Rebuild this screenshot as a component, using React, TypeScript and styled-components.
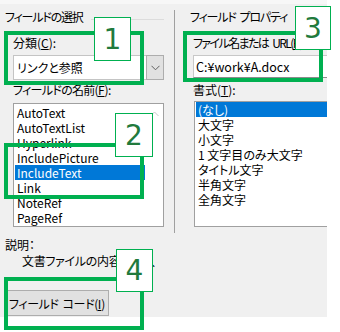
import styled, { createGlobalStyle } from "styled-components";

const GlobalStyle = createGlobalStyle`
  html, body {
    margin: 0;
    padding: 0;
    background: #ffffff;
  }
  body {
    font-family: "Noto Sans CJK JP", sans-serif;
    font-size: 12px;
    color: #000000;
  }
`;

const fieldNames = [
  "AutoText",
  "AutoTextList",
  "Hyperlink",
  "IncludePicture",
  "IncludeText",
  "Link",
  "NoteRef",
  "PageRef",
];

const formats = [
  "(なし)",
  "大文字",
  "小文字",
  "1 文字目のみ大文字",
  "タイトル文字",
  "半角文字",
  "全角文字",
];

const callouts = [
  { n: "1", box: { x: 4, y: 31, w: 140, h: 54 }, tag: { x: 94, y: 17, w: 37, h: 44 } },
  { n: "2", box: { x: 4, y: 143, w: 140, h: 56 }, tag: { x: 115, y: 113, w: 38, h: 44 } },
  { n: "3", box: { x: 183, y: 31, w: 140, h: 51 }, tag: { x: 295, y: 6, w: 36, h: 44 } },
  { n: "4", box: { x: 4, y: 277, w: 140, h: 53 }, tag: { x: 116, y: 249, w: 37, h: 43 } },
];

const App = () => {
  return (
    <>
      <GlobalStyle />
      <Screen>
        <Dialog>
          <TopStrip />
          <Columns>
            <LeftPane>
              <GroupHeader>
                <HeaderText>フィールドの選択</HeaderText>
                <HeaderLine />
              </GroupHeader>
              <Indented>
                <FieldLabel $top={10} $spacing={0}>
                  分類(<U>C</U>):
                </FieldLabel>
                <Combo>
                  <ComboValue>リンクと参照</ComboValue>
                  <ComboButton>
                    <svg width="9" height="6" viewBox="0 0 9 6">
                      <path d="M0.5 0.8 L4.5 4.8 L8.5 0.8" fill="none" stroke="#606060" strokeWidth="1" />
                    </svg>
                  </ComboButton>
                </Combo>
                <FieldLabel $top={2} $spacing={-0.7}>
                  フィールドの名前(<U>F</U>):
                </FieldLabel>
                <NameList>
                  <ListItems>
                    {fieldNames.map((name) => (
                      <ListRow key={name} $selected={name === "IncludeText"}>
                        {name}
                      </ListRow>
                    ))}
                  </ListItems>
                  <ScrollTrack>
                    <svg width="9" height="6" viewBox="0 0 9 6">
                      <path d="M0.5 5 L4.5 1 L8.5 5" fill="none" stroke="#c8c8c8" strokeWidth="1" />
                    </svg>
                  </ScrollTrack>
                </NameList>
              </Indented>
            </LeftPane>
            <Separator />
            <RightPane>
              <GroupHeader>
                <HeaderText>
                  フィールド<Gap $w={4} />プロパティ
                </HeaderText>
                <HeaderLine />
              </GroupHeader>
              <RightBody>
                <FieldLabel $top={10} $spacing={-1.6}>
                  ファイル名または<Gap $w={4} />URL(<U>F</U>):
                </FieldLabel>
                <TextInput>C:¥work¥A.docx</TextInput>
                <FieldLabel $top={4} $spacing={0}>
                  書式(<U>T</U>):
                </FieldLabel>
                <FormatList>
                  {formats.map((f) => (
                    <ListRow key={f} $selected={f === "(なし)"}>
                      {f}
                    </ListRow>
                  ))}
                </FormatList>
              </RightBody>
            </RightPane>
          </Columns>
          <Description>
            <DescTitle>説明：</DescTitle>
            <DescText>文書ファイルの内容を挿入</DescText>
          </Description>
          <FieldCodeButton>
            フィールド<Gap $w={4} />コード(<U>I</U>)
          </FieldCodeButton>
        </Dialog>

        {callouts.map((c) => (
          <div key={c.n}>
            <CalloutBox $x={c.box.x} $y={c.box.y} $w={c.box.w} $h={c.box.h} />
            <CalloutTag $x={c.tag.x} $y={c.tag.y} $w={c.tag.w} $h={c.tag.h}>
              {c.n}
            </CalloutTag>
          </div>
        ))}
      </Screen>
    </>
  );
};

const Screen = styled.div`
  position: relative;
  width: 340px;
  height: 332px;
  overflow: hidden;
  background: #ffffff;
`;

const Dialog = styled.div`
  width: 327px;
  height: 317px;
  background: #f0f0f0;
  display: flex;
  flex-direction: column;
  font-feature-settings: "palt";
`;

const TopStrip = styled.div`
  height: 4px;
  background: #f7f7f7;
`;

const Columns = styled.div`
  display: flex;
  height: 229px;
`;

const LeftPane = styled.div`
  width: 174px;
  display: flex;
  flex-direction: column;
`;

const Separator = styled.div`
  width: 1px;
  margin-top: 6px;
  height: 223px;
  background: #a0a0a0;
`;

const RightPane = styled.div`
  flex: 1;
  display: flex;
  flex-direction: column;
  padding-left: 10px;
`;

const GroupHeader = styled.div`
  display: flex;
  align-items: center;
  margin-top: 5px;
  height: 16px;
  padding-left: 5px;
`;

const HeaderText = styled.span`
  line-height: 16px;
  white-space: nowrap;
  letter-spacing: -1.2px;
`;

const Gap = styled.span<{ $w: number }>`
  display: inline-block;
  width: ${(p) => p.$w}px;
`;

const HeaderLine = styled.div`
  flex: 1;
  height: 1px;
  margin: 5px 10px 0 8px;
  background: #dcdcdc;
`;

const Indented = styled.div`
  display: flex;
  flex-direction: column;
  padding-left: 13px;
  width: 151px;
`;

const RightBody = styled.div`
  display: flex;
  flex-direction: column;
  padding-left: 8px;
`;

const FieldLabel = styled.div<{ $top: number; $spacing: number }>`
  margin-top: ${(p) => p.$top}px;
  line-height: 16px;
  height: 16px;
  white-space: nowrap;
  letter-spacing: ${(p) => p.$spacing}px;
`;

const U = styled.span`
  text-decoration: underline;
  letter-spacing: 0;
`;

const Combo = styled.div`
  display: flex;
  margin-top: 4px;
  height: 25px;
`;

const ComboValue = styled.div`
  flex: 1;
  background: #ffffff;
  border: 1px solid #c4c4c4;
  border-right: none;
  padding-left: 3px;
  line-height: 23px;
`;

const ComboButton = styled.div`
  width: 16px;
  background: #e1e1e1;
  border: 1px solid #adadad;
  display: flex;
  align-items: center;
  justify-content: center;
`;

const NameList = styled.div`
  display: flex;
  margin-top: 5px;
  height: 124px;
  background: #ffffff;
  border: 1px solid #a0a0a0;
  box-sizing: border-box;
  overflow: hidden;
`;

const ListItems = styled.div`
  flex: 1;
  display: flex;
  flex-direction: column;
  padding: 1px 1px 0 1px;
`;

const ScrollTrack = styled.div`
  width: 17px;
  display: flex;
  justify-content: center;
  padding-top: 7px;
`;

const ListRow = styled.div<{ $selected: boolean }>`
  height: 15px;
  line-height: 15px;
  padding-left: 2px;
  white-space: nowrap;
  background: ${(p) => (p.$selected ? "#0078d7" : "transparent")};
  color: ${(p) => (p.$selected ? "#ffffff" : "#000000")};
`;

const TextInput = styled.div`
  margin-top: 4px;
  height: 23px;
  box-sizing: border-box;
  background: #ffffff;
  border: 1px solid #c8c8c8;
  border-bottom-color: #8c8c8c;
  border-right: none;
  padding-left: 2px;
  line-height: 21px;
  font-size: 12.5px;
`;

const FormatList = styled.div`
  margin-top: 3px;
  margin-left: 1px;
  height: 126px;
  box-sizing: border-box;
  background: #ffffff;
  border: 1px solid #a0a0a0;
  border-right: none;
  display: flex;
  flex-direction: column;
  padding: 0 0 0 1px;

  & > div {
    padding-left: 2px;
  }
`;

const Description = styled.div`
  display: flex;
  flex-direction: column;
  margin-top: 4px;
`;

const DescTitle = styled.div`
  padding-left: 5px;
  line-height: 16px;
`;

const DescText = styled.div`
  margin-top: 0;
  padding-left: 22px;
  line-height: 16px;
  white-space: nowrap;
  letter-spacing: -0.3px;
`;

const FieldCodeButton = styled.div`
  margin: 21px 0 0 5px;
  width: 104px;
  height: 26px;
  box-sizing: border-box;
  background: #e1e1e1;
  border: 1px solid #adadad;
  display: flex;
  align-items: center;
  justify-content: center;
  white-space: nowrap;
  letter-spacing: -0.4px;
`;

const CalloutBox = styled.div<{ $x: number; $y: number; $w: number; $h: number }>`
  position: absolute;
  left: ${(p) => p.$x}px;
  top: ${(p) => p.$y}px;
  width: ${(p) => p.$w}px;
  height: ${(p) => p.$h}px;
  box-sizing: border-box;
  border: 4px solid #00b050;
`;

const CalloutTag = styled.div<{ $x: number; $y: number; $w: number; $h: number }>`
  position: absolute;
  left: ${(p) => p.$x}px;
  top: ${(p) => p.$y}px;
  width: ${(p) => p.$w}px;
  height: ${(p) => p.$h}px;
  box-sizing: border-box;
  background: #ffffff;
  border: 1px solid #00b050;
  display: flex;
  align-items: center;
  justify-content: center;
  font-family: "DejaVu Sans", sans-serif;
  font-size: 28px;
  color: #217a3c;
`;

export default App;
